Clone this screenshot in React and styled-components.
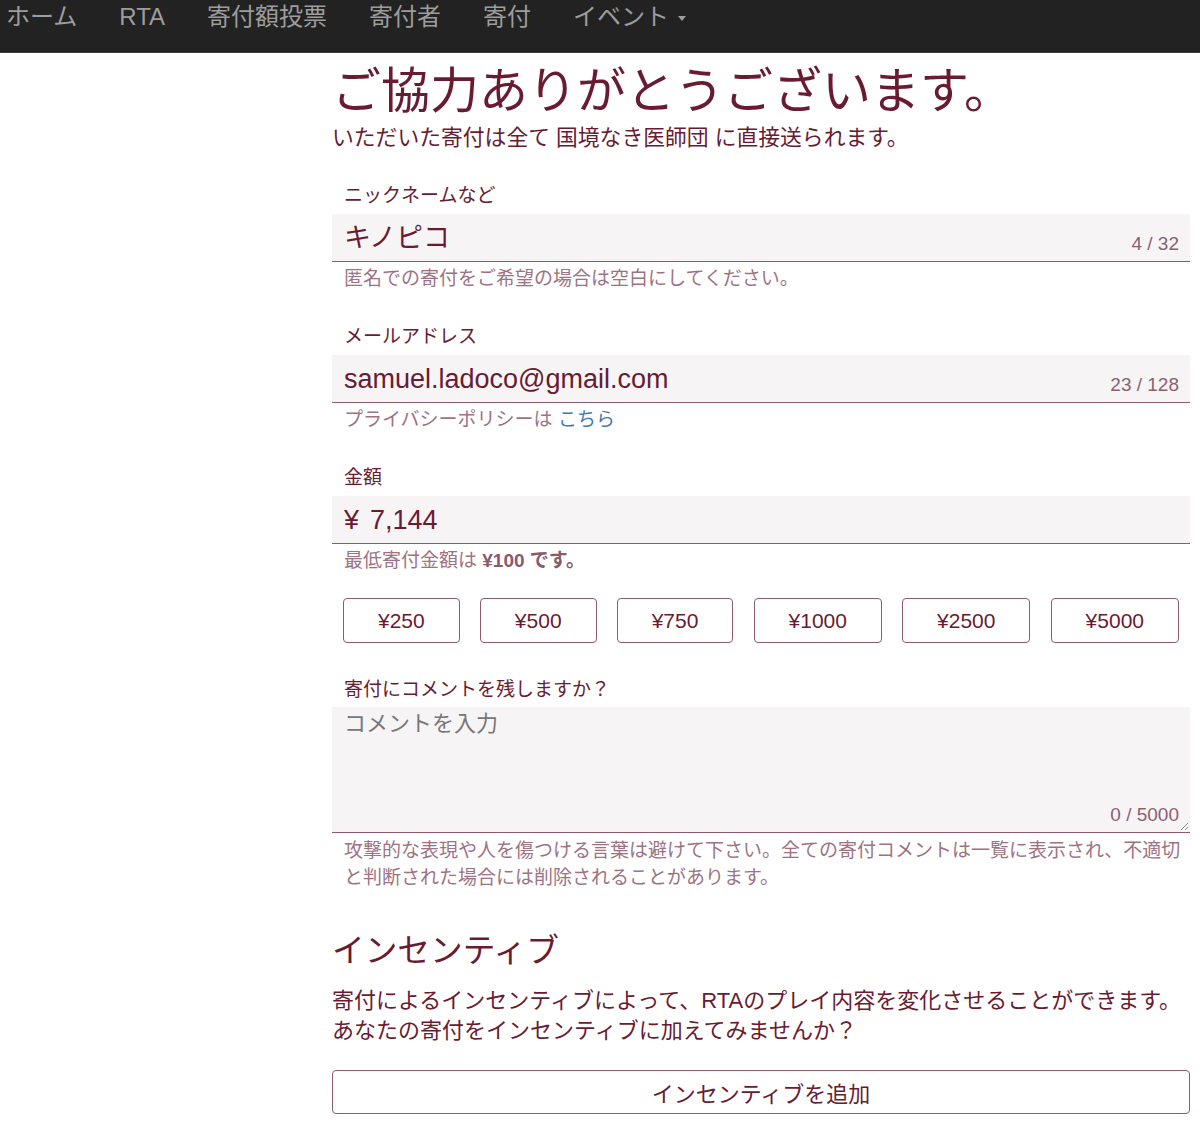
import React from "react";
import styled, { createGlobalStyle } from "styled-components";

const Global = createGlobalStyle`
  html, body { margin: 0; padding: 0; background: #fff; }
  body { font-family: "Liberation Sans", "Noto Sans CJK JP", sans-serif; color: #691b31; }
  * { box-sizing: border-box; }
`;

const C = {
  text: "#691b31",
  hint: "#9d7383",
  counter: "#8d5f73",
  border: "#8e5a6c",
  bg: "#f6f4f5",
  link: "#3d7ab5",
};

const Nav = styled.nav`
  height: 53px;
  background: #222;
  border-bottom: 1px solid #3a3a3a;
  display: flex;
  align-items: flex-start;
  gap: 42px;
  padding-left: 6px;
`;

const NavItem = styled.a`
  font-size: 24px;
  line-height: 34px;
  color: #9d9d9d;
  text-decoration: none;
  display: flex;
  align-items: center;
  gap: 9px;
`;

const Caret = styled.span`
  width: 0;
  height: 0;
  border-left: 4.5px solid transparent;
  border-right: 4.5px solid transparent;
  border-top: 5px solid #9d9d9d;
  margin-top: 2px;
`;

const Main = styled.main`
  margin-left: 332px;
  width: 858px;
  padding-bottom: 10px;
`;

const Title = styled.h1`
  margin: 10px 0 0;
  font-size: 49px;
  line-height: 56px;
  font-weight: 400;
  color: ${C.text};
`;

const Lead = styled.p`
  margin: 5px 0 0;
  font-size: 21.8px;
  line-height: 28px;
  color: ${C.text};
`;

const Field = styled.div`
  margin-top: ${(p) => p.$top}px;
  display: flex;
  flex-direction: column;
`;

const Label = styled.label`
  padding-left: 12px;
  font-size: 19px;
  line-height: 26px;
  color: ${C.text};
`;

const InputBox = styled.div`
  margin-top: ${(p) => (p.$tight ? 4 : 5)}px;
  height: ${(p) => p.$h}px;
  background: ${C.bg};
  border-bottom: 1px solid ${C.border};
  position: relative;
  display: flex;
  align-items: ${(p) => (p.$multi ? "flex-start" : "center")};
  padding: ${(p) => (p.$multi ? "4px 12px 0" : "0 12px")};
`;

const Value = styled.span`
  font-size: 27px;
  line-height: 34px;
  color: ${C.text};
`;

const Currency = styled.span`
  margin-right: 11px;
`;

const Placeholder = styled.span`
  font-size: 22px;
  line-height: 26px;
  color: #777;
`;

const Counter = styled.span`
  position: absolute;
  right: 11px;
  bottom: ${(p) => p.$bottom}px;
  font-size: 19px;
  line-height: 20px;
  color: ${C.counter};
`;

const Grip = styled.svg`
  position: absolute;
  right: 1px;
  bottom: 1px;
`;

const Hint = styled.div`
  margin-top: 4px;
  padding-left: 12px;
  font-size: 19px;
  line-height: ${(p) => (p.$lh ? p.$lh : 26)}px;
  color: ${C.hint};
  b { font-weight: 700; color: #8a5a6c; }
`;

const Link = styled.a`
  color: ${C.link};
  text-decoration: none;
`;

const Amounts = styled.div`
  margin-top: 24px;
  padding: 0 11px;
  display: flex;
  justify-content: space-between;
`;

const AmountButton = styled.button`
  height: 45px;
  padding: 0 34px;
  background: #fff;
  border: 1px solid ${C.border};
  border-radius: 4px;
  font-family: "Liberation Sans", "Noto Sans CJK JP", sans-serif;
  font-size: 21px;
  color: ${C.text};
`;

const SectionTitle = styled.h2`
  margin: 40px 0 0;
  font-size: 32.7px;
  line-height: 40px;
  font-weight: 400;
  color: ${C.text};
`;

const Para = styled.p`
  margin: 15px 0 0;
  font-size: 22px;
  line-height: 30px;
  color: ${C.text};
`;

const WideButton = styled.button`
  margin-top: 24px;
  width: 100%;
  height: 44px;
  background: #fff;
  border: 1px solid ${C.border};
  border-radius: 4px;
  font-family: "Liberation Sans", "Noto Sans CJK JP", sans-serif;
  font-size: 22px;
  color: ${C.text};
`;

const navItems = ["ホーム", "RTA", "寄付額投票", "寄付者", "寄付"];
const amounts = ["¥250", "¥500", "¥750", "¥1000", "¥2500", "¥5000"];

export default function App() {
  return (
    <>
      <Global />
      <Nav>
        {navItems.map((n) => (
          <NavItem key={n}>{n}</NavItem>
        ))}
        <NavItem>
          イベント<Caret />
        </NavItem>
      </Nav>
      <Main>
        <Title>ご協力ありがとうございます。</Title>
        <Lead>いただいた寄付は全て 国境なき医師団 に直接送られます。</Lead>

        <Field $top={31}>
          <Label>ニックネームなど</Label>
          <InputBox $h={48}>
            <Value>キノピコ</Value>
            <Counter $bottom={7}>4 / 32</Counter>
          </InputBox>
          <Hint>匿名での寄付をご希望の場合は空白にしてください。</Hint>
        </Field>

        <Field $top={32}>
          <Label>メールアドレス</Label>
          <InputBox $h={48}>
            <Value>samuel.ladoco@gmail.com</Value>
            <Counter $bottom={7}>23 / 128</Counter>
          </InputBox>
          <Hint>
            プライバシーポリシーは <Link>こちら</Link>
          </Hint>
        </Field>

        <Field $top={32}>
          <Label>金額</Label>
          <InputBox $h={48}>
            <Value>
              <Currency>¥</Currency>7,144
            </Value>
          </InputBox>
          <Hint>
            最低寄付金額は <b>¥100 です。</b>
          </Hint>
        </Field>

        <Amounts>
          {amounts.map((a) => (
            <AmountButton key={a}>{a}</AmountButton>
          ))}
        </Amounts>

        <Field $top={34}>
          <Label>寄付にコメントを残しますか？</Label>
          <InputBox $h={126} $multi $tight>
            <Placeholder>コメントを入力</Placeholder>
            <Counter $bottom={7}>0 / 5000</Counter>
            <Grip width="10" height="10" viewBox="0 0 10 10">
              <path d="M9 2 L2 9 M9 6 L6 9" stroke="#888" strokeWidth="1" />
            </Grip>
          </InputBox>
          <Hint $lh={27}>
            攻撃的な表現や人を傷つける言葉は避けて下さい。全ての寄付コメントは一覧に表示され、不適切と判断された場合には削除されることがあります。
          </Hint>
        </Field>

        <SectionTitle>インセンティブ</SectionTitle>
        <Para>
          寄付によるインセンティブによって、RTAのプレイ内容を変化させることができます。
          <br />
          あなたの寄付をインセンティブに加えてみませんか？
        </Para>
        <WideButton>インセンティブを追加</WideButton>
      </Main>
    </>
  );
}
